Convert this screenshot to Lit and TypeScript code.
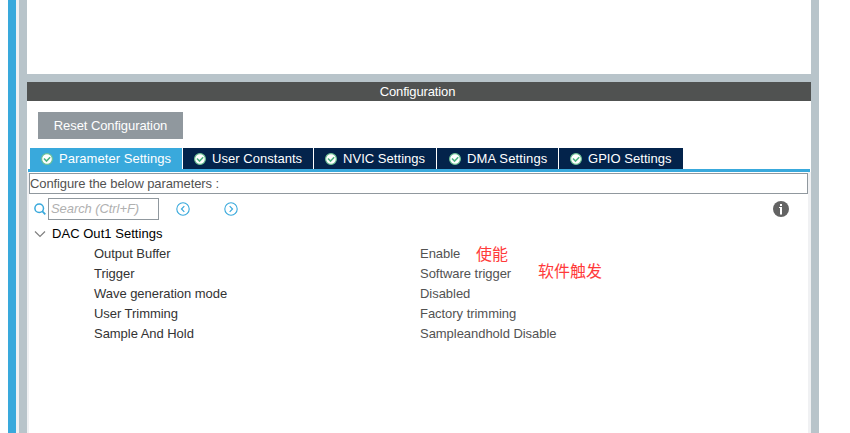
import { LitElement, html, css, svg } from "lit";
import { customElement, property } from "lit/decorators.js";
import { classMap } from "lit/directives/class-map.js";

const TABS = [
  { label: "Parameter Settings", width: 152 },
  { label: "User Constants", width: 130 },
  { label: "NVIC Settings", width: 122 },
  { label: "DMA Settings", width: 121, wide: true },
  { label: "GPIO Settings", width: 124 },
];

const PARAMS = [
  { name: "Output Buffer", value: "Enable", note: "使能", cls: "n1" },
  { name: "Trigger", value: "Software trigger", note: "软件触发", cls: "n2" },
  { name: "Wave generation mode", value: "Disabled" },
  { name: "User Trimming", value: "Factory trimming" },
  { name: "Sample And Hold", value: "Sampleandhold Disable" },
];

@customElement("config-tab")
export class ConfigTab extends LitElement {
  @property() label = "";
  @property({ type: Boolean, reflect: true }) active = false;
  @property({ type: Boolean, reflect: true }) wide = false;
  static styles = css`
    :host {
      display: flex;
      align-items: center;
      height: 21px;
      box-sizing: border-box;
      padding-left: 11px;
      background: #03234b;
      color: #fff;
      letter-spacing: 0.04px;
      white-space: nowrap;
    }
    :host([active]) {
      background: #39a9dc;
    }
    :host([wide]) {
      padding-left: 12px;
      letter-spacing: 0.14px;
    }
    svg {
      margin-right: 6px;
      flex: none;
    }
  `;
  render() {
    return html`<svg width="12" height="12" viewBox="0 0 12 12">
        <circle cx="6" cy="6" r="5.4" fill="#fff" stroke="#6cc193" stroke-width="1.2" />
        <path d="M3 5.5L5.5 8L9.2 4.3" fill="none" stroke="#4db380" stroke-width="1.6" />
      </svg><span>${this.label}</span>`;
  }
}

const circleArrow = (d: string) => html`<svg width="14" height="14" viewBox="0 0 14 14" fill="none" stroke="#39a9dc">
  <circle cx="7" cy="7" r="6.2" stroke-width="1.1" />
  ${svg`<path d=${d} stroke-width="1.2" />`}
</svg>`;

@customElement("app-root")
export class AppRoot extends LitElement {
  static styles = css`
    :host {
      display: flex;
      width: 850px;
      height: 433px;
      overflow: hidden;
      background: #fff;
      font: 13px/20px "Liberation Sans", Arial, "Noto Sans CJK SC", sans-serif;
      letter-spacing: -0.04px;
      color: #333;
    }
    .rail {
      width: 8px;
      margin-left: 8px;
      background: #39a9dc;
    }
    .gap {
      width: 3px;
      background: #f0f1f3;
    }
    .frame {
      width: 784px;
      border: solid #b8c4ca;
      border-width: 0 8px;
      display: flex;
      flex-direction: column;
    }
    .upper {
      height: 74px;
      flex: none;
      border-bottom: 8px solid #b8c4ca;
    }
    .title {
      height: 19px;
      flex: none;
      line-height: 19px;
      background: #505251;
      color: #fff;
      text-align: center;
      padding-right: 3px;
      letter-spacing: -0.13px;
    }
    .reset {
      width: 145px;
      height: 27px;
      margin: 11px 0 9px 11px;
      flex: none;
      border: 0;
      padding: 0;
      background: #90989e;
      color: #fff;
      font: inherit;
      letter-spacing: -0.08px;
    }
    .tabs {
      display: flex;
      gap: 1px;
      margin: 0 1px;
      padding-left: 2px;
      border-bottom: 3px solid #39a9dc;
    }
    .body {
      flex: 1;
      border: solid #f0f1f3;
      border-width: 0 3px 0 2px;
      padding-top: 1px;
    }
    .hint {
      box-sizing: border-box;
      height: 21px;
      border: 1px solid #90989e;
      line-height: 19px;
      color: #525252;
      letter-spacing: -0.1px;
    }
    .tools {
      display: flex;
      align-items: center;
      height: 22px;
      margin: 4px 0 4px 5px;
    }
    .search {
      box-sizing: border-box;
      width: 111px;
      height: 22px;
      margin: 0 17px 0 2px;
      border: 1px solid #90989e;
      padding-left: 2px;
      color: #b0b0b0;
      font-style: italic;
      letter-spacing: -0.08px;
    }
    .next {
      margin-left: 34px;
      display: flex;
    }
    .prev {
      display: flex;
    }
    .info {
      margin: 0 19px 0 auto;
    }
    .group {
      display: flex;
      align-items: center;
      height: 20px;
      padding-left: 5px;
      color: #000;
      letter-spacing: 0.04px;
    }
    .group svg {
      margin-right: 6px;
    }
    .row {
      position: relative;
      display: grid;
      grid-template-columns: 326px 1fr;
      padding-left: 65px;
      height: 20px;
    }
    .value {
      color: #525252;
    }
    .note {
      position: absolute;
      color: #ff3a3a;
      font: 16px/20px "Noto Sans CJK SC", sans-serif;
      letter-spacing: 0;
      white-space: nowrap;
    }
    .n1 {
      left: 447px;
      top: -1px;
    }
    .n2 {
      left: 509px;
      top: -4px;
    }
  `;

  render() {
    return html`
      <div class="rail"></div>
      <div class="gap"></div>
      <main class="frame">
        <div class="upper"></div>
        <div class="title">Configuration</div>
        <button class="reset">Reset Configuration</button>
        <nav class="tabs">
          ${TABS.map(
            (t, i) =>
              html`<config-tab
                .label=${t.label}
                ?active=${i === 0}
                ?wide=${!!t.wide}
                style="width:${t.width}px"
              ></config-tab>`
          )}
        </nav>
        <section class="body">
          <div class="hint">Configure the below parameters :</div>
          <div class="tools">
            <svg width="12" height="12" viewBox="0 0 12 12" fill="none" stroke="#39a9dc">
              <circle cx="5.2" cy="5.2" r="4.3" stroke-width="1.5" />
              <path d="M8.2 8.2L11.3 11.3" stroke-width="1.8" />
            </svg>
            <div class="search">Search (Ctrl+F)</div>
            <span class="prev">${circleArrow("M8.3 4.2L5.5 7L8.3 9.8")}</span>
            <span class="next">${circleArrow("M5.7 4.2L8.5 7L5.7 9.8")}</span>
            <svg class="info" width="16" height="16" viewBox="0 0 16 16">
              <circle cx="8" cy="8" r="8" fill="#636363" />
              <path d="M7 3h2v2H7zM6 6h3v7.5H7V7H6z" fill="#fff" />
            </svg>
          </div>
          <div class="group">
            <svg width="12" height="8" viewBox="0 0 12 8">
              <path d="M1 1.5L6 6.5L11 1.5" fill="none" stroke="#808080" stroke-width="1.2" />
            </svg>
            DAC Out1 Settings
          </div>
          ${PARAMS.map(
            (p) => html`<div class="row">
              <span>${p.name}</span><span class="value">${p.value}</span>
              ${p.note ? html`<span class=${classMap({ note: true, [p.cls!]: true })}>${p.note}</span>` : ""}
            </div>`
          )}
        </section>
      </main>
    `;
  }
}
